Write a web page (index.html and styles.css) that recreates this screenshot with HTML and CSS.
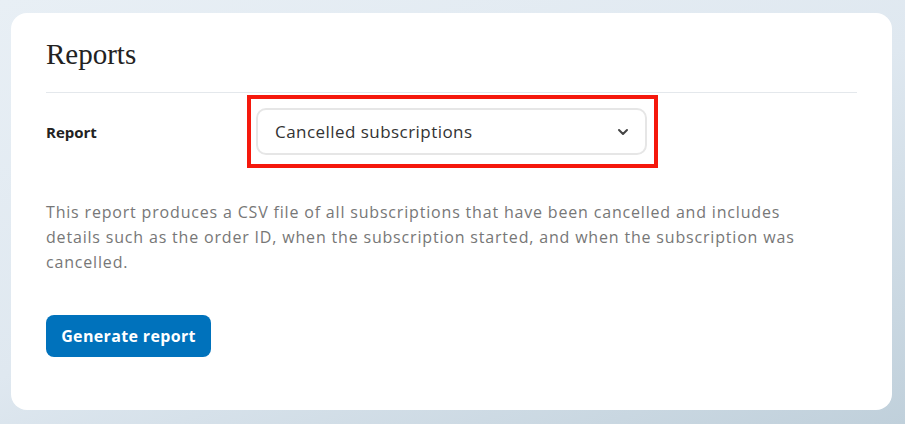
FILE: index.html
```html
<!DOCTYPE html>
<html>
<head>
<meta charset="utf-8">
<link rel="stylesheet" href="styles.css">
</head>
<body>
<div class="card">
  <h1 class="title">Reports</h1>
  <div class="row">
    <div class="label">Report</div>
    <div class="highlight">
      <div class="select">
        <span class="select-text">Cancelled subscriptions</span>
        <svg class="chev" width="12" height="8" viewBox="0 0 12 8"><path d="M2 2l4 4 4-4" fill="none" stroke="#444" stroke-width="2" stroke-linecap="round" stroke-linejoin="round"/></svg>
      </div>
    </div>
  </div>
  <p class="desc">This report produces a CSV file of all subscriptions that have been cancelled and includes details such as the order ID, when the subscription started, and when the subscription was cancelled.</p>
  <button class="btn">Generate report</button>
</div>
</body>
</html>
```
FILE: styles.css
```css
html, body {
  margin: 0;
  height: 100%;
}
body {
  background: linear-gradient(160deg, #e8eff5 0%, #dfe8f0 50%, #c0d0db 100%);
  padding: 13px 13px 14px 11px;
  box-sizing: border-box;
  font-family: "Open Sans", "Liberation Sans", sans-serif;
}
.card {
  background: #fff;
  border-radius: 16px;
  width: 881px;
  height: 397px;
  box-sizing: border-box;
  padding: 25px 35px 0 35px;
}
.title {
  font-family: "Liberation Serif", serif;
  font-weight: normal;
  font-size: 29px;
  line-height: 32px;
  color: #222;
  margin: 0;
  padding-bottom: 22px;
  border-bottom: 1px solid #e4e8ec;
}
.row {
  display: flex;
  align-items: center;
  margin-top: 2px;
}
.label {
  width: 201px;
  font-weight: 700;
  font-size: 15px;
  color: #222;
}
.highlight {
  border: 4px solid #f5180c;
  padding: 9px 7px 9px 5px;
}
.select {
  width: 391px;
  height: 47px;
  box-sizing: border-box;
  border: 2px solid #e6e6e6;
  border-radius: 10px;
  display: flex;
  align-items: center;
  justify-content: space-between;
  padding: 0 16px 0 17px;
}
.select-text {
  font-size: 17px;
  letter-spacing: 0.45px;
  color: #333;
}
.desc {
  margin: 32px 0 0 0;
  width: 790px;
  font-size: 16px;
  letter-spacing: 0.82px;
  line-height: 25px;
  color: #777;
}
.btn {
  margin-top: 40px;
  background: #0072bc;
  color: #fff;
  border: none;
  border-radius: 8px;
  height: 42px;
  width: 165px;
  padding: 0;
  font-family: "Open Sans", "Liberation Sans", sans-serif;
  font-weight: 700;
  font-size: 16px;
  letter-spacing: 0.35px;
}
```
